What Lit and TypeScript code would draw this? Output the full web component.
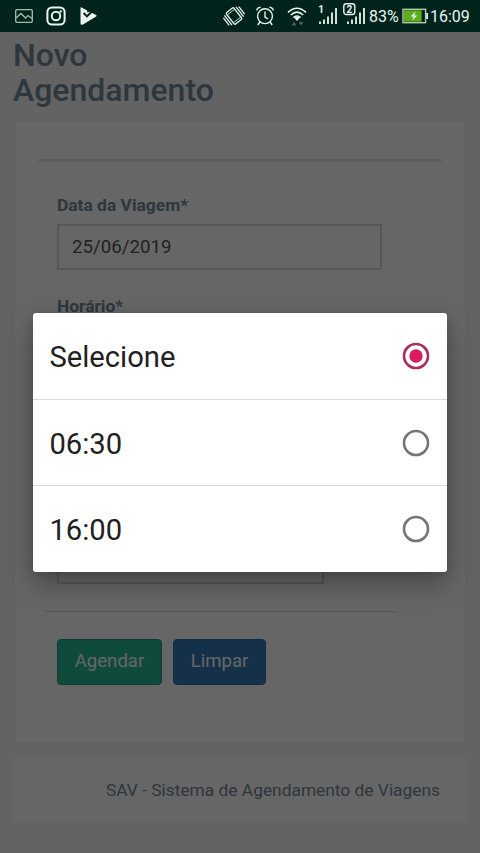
import { LitElement, html, css } from "lit";
import { customElement, property, state } from "lit/decorators.js";

@customElement("status-bar")
export class StatusBar extends LitElement {
  static styles = css`
    :host {
      display: flex;
      justify-content: space-between;
      height: 32px;
      padding: 0 10px 0 14px;
      background-color: #00231c;
      color: #e9f3f0;
      font-family: Roboto, sans-serif;
      font-size: 16px;
      line-height: 33px;
    }

    .group {
      display: flex;
    }

    svg {
      display: block;
      fill: none;
      stroke: currentColor;
    }

    .photo {
      color: #a3bbb0;
      margin-right: 12px;
    }

    .insta {
      margin-right: 13px;
    }

    .vibrate {
      margin-right: 10px;
    }

    .alarm {
      margin-right: 12px;
    }

    .wifi {
      margin-right: 11px;
    }

    .sim {
      margin-right: 3px;
    }

    .percent {
      width: 33px;
      margin-left: -1px;
      white-space: nowrap;
    }

    .clock {
      width: 40px;
      white-space: nowrap;
    }

    .solid {
      fill: currentColor;
      stroke: none;
    }

    .num {
      fill: currentColor;
      stroke: none;
      font: bold 10px Roboto, sans-serif;
    }
  `;

  render() {
    return html`
      <div class="group">
        <svg class="photo" width="20" height="32" viewBox="0 0 20 32">
          <rect x="1.7" y="9.7" width="16.6" height="12.6" rx="1" stroke-width="1.3" />
          <path d="M2 18 L7 13.5 L11.5 18 L14 15.5 L18 18.5" stroke-width="1.3" />
        </svg>
        <svg class="insta" width="20" height="32" viewBox="0 0 20 32">
          <rect x="1.4" y="7.4" width="17.2" height="17.2" rx="4.6" stroke-width="2" />
          <circle cx="10" cy="16" r="4.2" stroke-width="2" />
          <circle class="solid" cx="14.7" cy="11.4" r="1.2" />
        </svg>
        <svg width="18" height="32" viewBox="0 0 18 32">
          <path class="solid" d="M1.5 8 Q1.5 7 2.6 7.5 L8.2 10.4 L8.2 12.5 L10.5 11.7 L17.2 15 Q18 15.7 17.2 16.4 L4 24.6 Q1.5 25.5 1.5 23 Z" />
          <path d="M4.6 13 L8 16.4 L14 10.2" stroke="#00231c" stroke-width="2" />
        </svg>
      </div>
      <div class="group">
        <svg class="vibrate" width="22" height="32" viewBox="0 0 22 32" overflow="visible">
          <g transform="rotate(-38 11 16)" stroke-width="1.3">
            <rect x="6.2" y="8.8" width="9.6" height="14.4" rx="1.2" />
            <path d="M6.5 11 H15.5 M6.5 21 H15.5" stroke-width="0.8" />
            <path d="M3.8 9.5 V22 M1.4 11 V20.5 M18.2 10 V22.5 M20.6 11.5 V21" />
          </g>
        </svg>
        <svg class="alarm" width="20" height="32" viewBox="0 0 20 32">
          <circle cx="10" cy="16.2" r="7.4" stroke-width="1.4" />
          <path d="M10 11.5 V17 L13 18.8" stroke-width="1.4" />
          <path d="M1.8 10.5 Q2 7.6 5.6 7.2 M18.2 10.5 Q18 7.6 14.4 7.2 M4.8 22 L2.8 25 M15.2 22 L17.2 25" stroke-width="1.4" />
        </svg>
        <svg class="wifi" width="20" height="32" viewBox="0 0 20 32">
          <path d="M1 12.3 Q10 4.2 19 12.3 M3.8 15 Q10 9.4 16.2 15 M6.4 17.6 Q10 14.4 13.6 17.6" stroke-width="1.6" />
          <path class="solid" d="M7.2 17.7 Q10 15.7 12.8 17.7 L10 21 Z" />
          <path d="M4.5 25.5 L7 21.8 L9.2 25.5 Z M11.5 22 H16.2 L13.8 25.5 Z" fill="#4c665f" stroke="none" />
        </svg>
        <svg class="sim" width="22" height="32" viewBox="0 0 22 32">
          <text class="num" x="0.3" y="12.8">1</text>
          <path d="M2 21.5 V24 M6 19.5 V24 M10 16.5 V24 M14 12.5 V24 M18 8 V24" stroke-width="1.8" />
        </svg>
        <svg class="sim" width="24" height="32" viewBox="0 0 24 32">
          <rect x="0.8" y="3.7" width="11" height="10.8" rx="2.6" stroke-width="1.4" />
          <text class="num" x="3.4" y="12.6">2</text>
          <path d="M5 21.5 V24 M9 19.5 V24 M13 16.5 V24 M17 12.5 V24 M21 8 V24" stroke-width="1.8" />
        </svg>
        <span class="percent">83%</span>
        <svg width="28" height="32" viewBox="0 0 28 32">
          <rect x="1" y="9.3" width="22.6" height="13.4" stroke="#b4cbb5" stroke-width="1.4" />
          <rect x="2" y="10.3" width="17.6" height="11.4" fill="#5eae1a" stroke="none" />
          <path class="solid" d="M24.3 13 H26 V19 H24.3 Z" />
          <path class="solid" d="M13.5 11.5 L8.6 16.4 H11.6 L10.3 20.6 L15.2 15.6 H12.3 Z" />
        </svg>
        <span class="clock">16:09</span>
      </div>
    `;
  }
}

@customElement("option-row")
export class OptionRow extends LitElement {
  @property() label = "";
  @property({ type: Boolean }) checked = false;

  static styles = css`
    :host {
      display: flex;
      align-items: center;
      justify-content: space-between;
      box-sizing: border-box;
      padding: 0 17px 0 16px;
      color: #212121;
      font-size: 29.2px;
      cursor: pointer;
    }

    .label {
      padding-top: 2px;
    }

    svg {
      display: block;
      fill: none;
      stroke: #757575;
      stroke-width: 2.6;
    }

    .on {
      stroke: #a82c5c;
    }

    .dot {
      fill: #d81b60;
      stroke: none;
    }
  `;

  render() {
    return html`
      <span class="label">${this.label}</span>
      <svg class=${this.checked ? "on" : ""} width="28" height="28" viewBox="0 0 28 28">
        <circle cx="14" cy="14" r="12" />
        ${this.checked
          ? html`<svg viewBox="0 0 28 28"><circle class="dot" cx="14" cy="14" r="6.7" /></svg>`
          : ""}
      </svg>
    `;
  }
}

@customElement("app-root")
export class AppRoot extends LitElement {
  @state() selected = "Selecione";

  options = ["Selecione", "06:30", "16:00"];

  static styles = css`
    :host {
      display: flex;
      flex-direction: column;
      position: relative;
      height: 853px;
      overflow: hidden;
      font-family: Roboto, sans-serif;
      color: #73879c;
    }

    .page {
      flex: 1;
      padding: 6px 13px 0;
      background-color: #f7f7f7;
    }

    h1 {
      width: 240px;
      margin: 0 0 12px;
      font-size: 32px;
      font-weight: 500;
      line-height: 35px;
    }

    .panel {
      box-sizing: border-box;
      height: 624px;
      padding: 37px 23px 0;
      background-color: #fff;
      border: 2px solid #f1f2f4;
    }

    .title-line {
      height: 3px;
      margin-bottom: 31px;
      background-color: #ebeced;
    }

    .form {
      display: flex;
      flex-direction: column;
      align-items: flex-start;
      padding-left: 19px;
    }

    label {
      font-size: 17.4px;
      font-weight: 700;
      line-height: 24px;
    }

    .field {
      box-sizing: border-box;
      width: 325px;
      height: 46px;
      margin: 7px 0 24px;
      padding: 0 13px;
      border: 2px solid #dadada;
      color: #555;
      font-size: 18.7px;
      line-height: 42px;
    }

    .narrow {
      width: 267px;
      margin-bottom: 27px;
    }

    .gap {
      height: 136px;
    }

    .divider {
      width: 352px;
      height: 1px;
      margin: 0 0 27px -13px;
      background-color: #dedede;
    }

    .buttons {
      display: flex;
      gap: 11px;
    }

    .btn {
      box-sizing: border-box;
      width: 105px;
      height: 46px;
      border: 1px solid #169f85;
      border-radius: 4px;
      background-color: #26b99a;
      color: #fff;
      font-size: 18.6px;
      line-height: 43px;
      text-align: center;
    }

    .clear {
      width: 93px;
      border-color: #2e6da4;
      background-color: #337ab7;
    }

    footer {
      height: 66px;
      margin-top: 12px;
      padding-right: 27px;
      background-color: #fff;
      font-size: 17.35px;
      line-height: 68px;
      text-align: right;
    }

    .scrim {
      position: absolute;
      inset: 32px 0 0;
      background-color: rgba(0, 0, 0, 0.6);
    }

    .dialog {
      position: absolute;
      left: 33.4px;
      top: 313.3px;
      width: 413.2px;
      height: 258.5px;
      display: grid;
      grid-template-rows: 85.5px 86.5px 1fr;
      border-radius: 3px;
      background-color: #fff;
      box-shadow: 0 12px 28px rgba(0, 0, 0, 0.3), 0 2px 10px rgba(0, 0, 0, 0.12);
    }

    option-row + option-row {
      border-top: 1px solid #dcdcdc;
    }
  `;

  render() {
    return html`
      <status-bar></status-bar>
      <div class="page">
        <h1>Novo Agendamento</h1>
        <div class="panel">
          <div class="title-line"></div>
          <div class="form">
            <label>Data da Viagem*</label>
            <div class="field">25/06/2019</div>
            <label>Horário*</label>
            <div class="field"></div>
            <div class="gap"></div>
            <div class="field narrow"></div>
            <div class="divider"></div>
            <div class="buttons">
              <div class="btn">Agendar</div>
              <div class="btn clear">Limpar</div>
            </div>
          </div>
        </div>
        <footer>SAV - Sistema de Agendamento de Viagens</footer>
      </div>
      <div class="scrim"></div>
      <div class="dialog">
        ${this.options.map(
          (name) => html`<option-row
            .label=${name}
            .checked=${name === this.selected}
            @click=${() => (this.selected = name)}
          ></option-row>`
        )}
      </div>
    `;
  }
}
